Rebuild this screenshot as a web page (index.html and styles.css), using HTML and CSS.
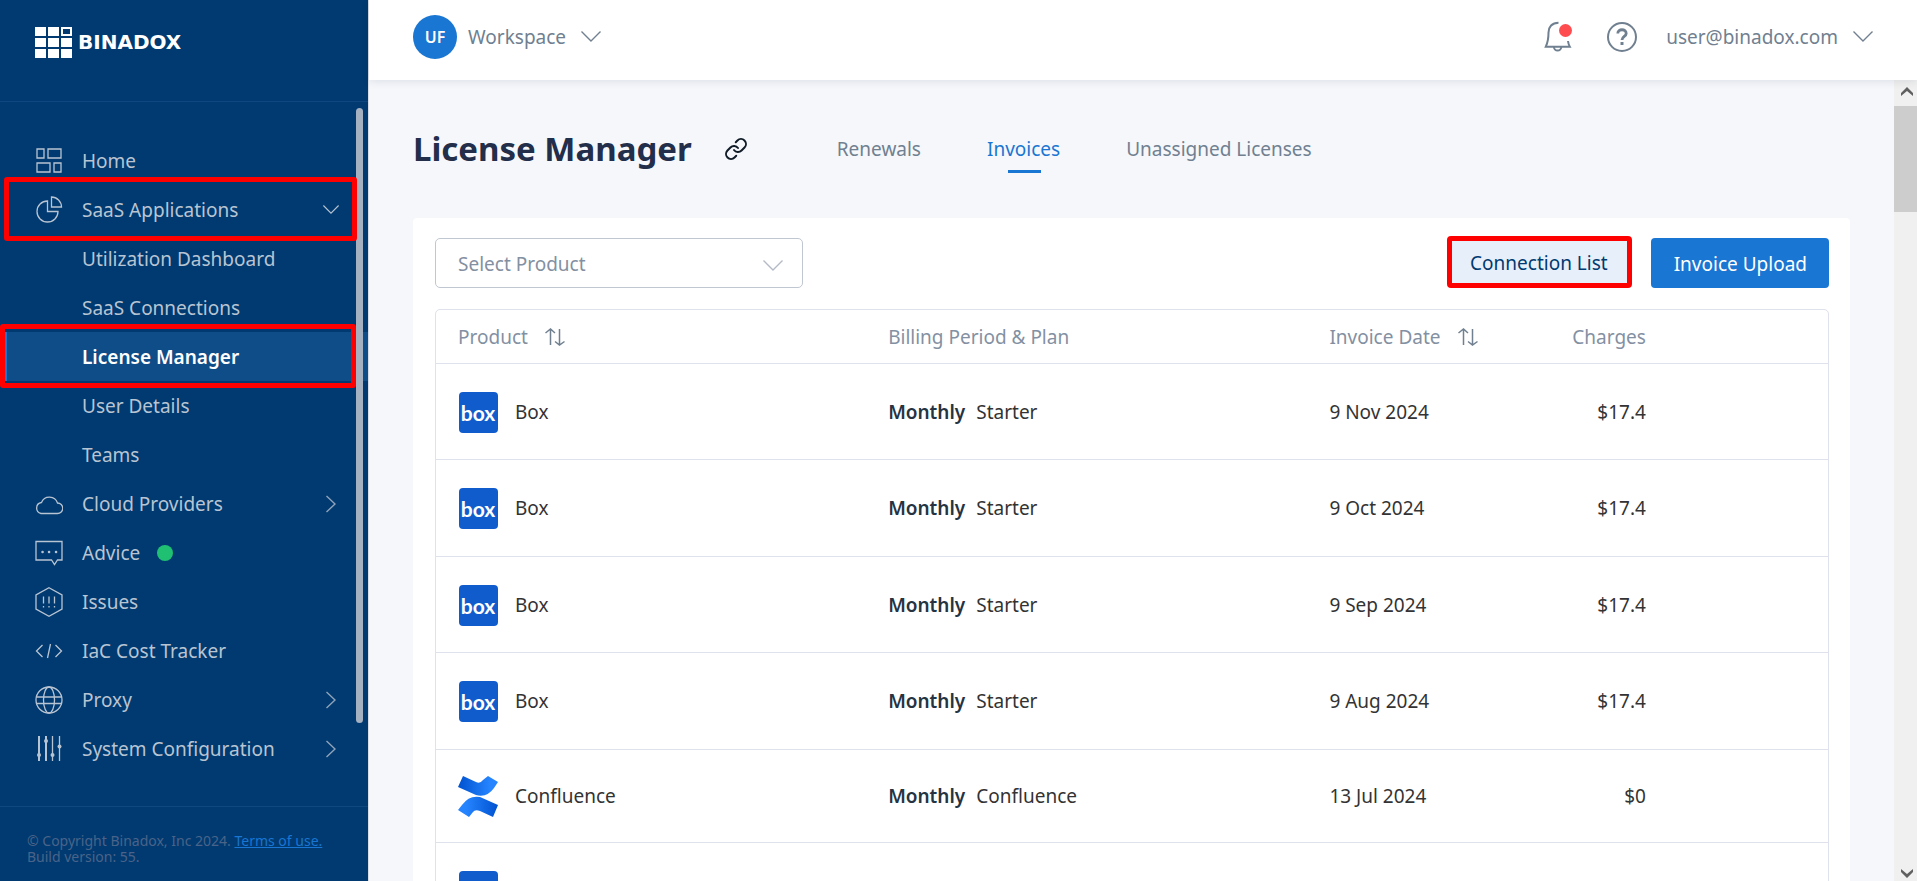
FILE: index.html
```html
<!DOCTYPE html>
<html lang="en">
<head>
<meta charset="utf-8">
<title>License Manager - Binadox</title>
<link rel="stylesheet" href="styles.css">
</head>
<body>
<svg class="defs" aria-hidden="true">
  <defs>
    <linearGradient id="cf-top" x1="0" x2="1" y1="0" y2="0"><stop offset="0" stop-color="#0052d0"/><stop offset=".8" stop-color="#2684ff"/></linearGradient>
    <linearGradient id="cf-bottom" x1="1" x2="0" y1="0" y2="0"><stop offset="0" stop-color="#0052d0"/><stop offset=".8" stop-color="#2684ff"/></linearGradient>
    <symbol id="box-logo" viewBox="0 0 40 42"><rect x="1" y="1" width="39" height="41" rx="4" fill="#115ccd"/><text x="20" y="30" text-anchor="middle" class="box-word">box</text></symbol>
    <symbol id="confluence-logo" viewBox="0 0 40 42"><path fill="url(#cf-top)" d="M5 1 L18 7 Q22 9 25 5 L30 1 L40 7 L36 13 Q29 23 18 20 L0 12Z"/><path fill="url(#cf-bottom)" d="M35 42 L22 36 Q17 34 15 37 L11 42 L0 35 L4 30 Q11 20 22 22 L40 30Z"/></symbol>
    <symbol id="down" viewBox="0 0 20 11"><path d="M.5 .5 10 10 19.5 .5"/></symbol>
    <symbol id="right" viewBox="0 0 10 18"><path d="M.5 1 9 9 .5 17"/></symbol>
    <symbol id="sort" viewBox="0 0 20 18"><path d="M5.500 17V1M.5 5 5.500 1 10 5M14.500 1V17M10 13.500 14.500 17 19.500 13.500"/></symbol>
  </defs>
</svg>
<div class="app">
  <aside class="sidebar">
    <a class="brand" href="#">
      <svg width="37" height="33" viewBox="0 0 37 33" aria-hidden="true"><g fill="#fff"><path d="M0 1h11v9H0zM13 1h11v9H13zM0 12h11v9H0zM13 12h11v9H13zM26 12h11v9H26zM0 23h11v9H0zM13 23h11v9H13zM26 23h11v9H26z"/></g><path d="M27 2h9v7h-9z" fill="none" stroke="#fff" stroke-width="2"/></svg>
      <span>BINADOX</span>
    </a>
    <nav class="nav">
      <a class="item" href="#"><svg class="icon" viewBox="0 0 28 28"><path d="M2 2h7v9H2zM13 2h13v9H13zM2 16h13v9H2zM19 16h7v9h-7z"/></svg>Home</a>
      <a class="item" href="#"><svg class="icon" viewBox="0 0 28 28"><path d="M12.500 5A10.500 10.500 0 1 0 23 15.500H12.500zM16.500 1V11H26.500A10 10 0 0 0 16.500 1z"/></svg>SaaS Applications<svg class="chev-down"><use href="#down"/></svg><i class="mark mark-parent"></i></a>
      <a class="item sub" href="#">Utilization Dashboard</a>
      <a class="item sub" href="#">SaaS Connections</a>
      <a class="item sub active" href="#">License Manager<i class="mark mark-active"></i></a>
      <a class="item sub" href="#">User Details</a>
      <a class="item sub" href="#">Teams</a>
      <a class="item" href="#"><svg class="icon" viewBox="0 0 28 28"><path d="M6 23.500H22.500A5 5 0 0 0 22.500 13A8.500 8.500 0 0 0 6.500 12.500A5.600 5.600 0 0 0 6 23.500z"/></svg>Cloud Providers<svg class="chev-right"><use href="#right"/></svg></a>
      <a class="item" href="#"><svg class="icon" viewBox="0 0 28 28"><path d="M1 2.500H27V21H22.500L19.500 25.500 16.500 21H1z"/><path class="dots" d="M7.500 13h.1M14 13h.1M21 13h.1"/></svg>Advice<i class="status"></i></a>
      <a class="item" href="#"><svg class="icon" viewBox="0 0 28 30"><path d="M14 .8 27 8V22L14 29.200 1 22V8zM8.500 9.500v7M14 9.500v7M19.500 9.500v7M8.500 19v1.500M14 19v1.500M19.500 19v1.500"/></svg>Issues</a>
      <a class="item" href="#"><svg class="icon" viewBox="0 0 28 28"><path d="M7.500 8 1.500 14 7.500 20M20.500 8 26.500 14 20.500 20M15.500 7 12.500 21"/></svg>IaC Cost Tracker</a>
      <a class="item" href="#"><svg class="icon" viewBox="0 0 28 28"><circle cx="14" cy="14" r="13"/><ellipse cx="14" cy="14" rx="5.500" ry="13"/><path d="M1.500 11H26.500M1.500 17.500H26.500"/></svg>Proxy<svg class="chev-right"><use href="#right"/></svg></a>
      <a class="item" href="#"><svg class="icon" viewBox="0 0 28 28"><path class="thick" d="M4 1V26M11 1V26"/><path d="M17.500 1V26M24.500 1V26"/><g class="knob"><circle cx="4" cy="20" r="2"/><circle cx="11" cy="6" r="2"/><circle cx="17.500" cy="20" r="2"/><circle cx="24.500" cy="11.500" r="2"/></g></svg>System Configuration<svg class="chev-right"><use href="#right"/></svg></a>
      <i class="nav-thumb"></i>
    </nav>
    <footer class="legal">© Copyright Binadox, Inc 2024. <a href="#">Terms of use.</a><br>Build version: 55.</footer>
  </aside>

  <div class="main">
    <header class="topbar">
      <button class="plain workspace"><span class="avatar">UF</span>Workspace<svg class="top-chev"><use href="#down"/></svg></button>
      <div class="tools">
        <button class="plain" aria-label="Notifications"><svg width="28" height="32" viewBox="0 0 28 32"><path d="M14.500 1.700C8 1.700 4.500 6 4.500 11.500C4.500 18 4 21 1.800 25.700H25.800C24.800 24 24.300 22.500 24 20" class="bell"/><path d="M10 26a3.600 3.600 0 0 0 7.200 0" class="bell"/><circle cx="21.500" cy="9.500" r="6.500" fill="#ff4d4f"/></svg></button>
        <button class="plain" aria-label="Help"><svg width="32" height="32" viewBox="0 0 32 32"><circle cx="16" cy="16" r="14" class="bell"/><path d="M11.800 12.500C11.800 7.500 20.200 7.500 20.200 12.500C20.200 15.500 16 15.500 16 19" class="q"/><path d="M14.500 21h3v3h-3z" fill="#708090"/></svg></button>
        <button class="plain account">user@binadox.com<svg class="top-chev"><use href="#down"/></svg></button>
      </div>
    </header>
    <div class="body">
      <main class="content">
        <div class="heading">
          <h1>License Manager</h1>
          <a class="link" href="#" aria-label="Copy link"><svg width="24" height="24" viewBox="0 0 24 24"><path d="M10 13a5 5 0 0 0 7.540.540l3-3a5 5 0 0 0-7.070-7.070l-1.720 1.710"/><path d="M14 11a5 5 0 0 0-7.540-.540l-3 3a5 5 0 0 0 7.070 7.070l1.710-1.710"/></svg></a>
          <nav class="tabs"><a href="#">Renewals</a><a class="current" href="#">Invoices</a><a href="#">Unassigned Licenses</a></nav>
        </div>
        <section class="card">
          <div class="controls">
            <div class="picker"><select aria-label="Select Product"><option>Select Product</option></select><svg class="picker-chev"><use href="#down"/></svg></div>
            <div class="actions"><button class="btn outlined">Connection List</button><button class="btn primary">Invoice Upload</button></div>
          </div>
          <div class="frame">
          <table>
            <colgroup><col class="c-product"><col class="c-plan"><col class="c-date"><col class="c-charge"><col></colgroup>
            <thead><tr><th>Product<svg class="sort"><use href="#sort"/></svg></th><th>Billing Period &amp; Plan</th><th>Invoice Date<svg class="sort"><use href="#sort"/></svg></th><th class="num">Charges</th><th></th></tr></thead>
            <tbody>
              <tr><td><div class="product"><svg class="logo"><use href="#box-logo"/></svg>Box</div></td><td><b>Monthly</b>Starter</td><td>9 Nov 2024</td><td class="num">$17.4</td><td></td></tr>
              <tr><td><div class="product"><svg class="logo"><use href="#box-logo"/></svg>Box</div></td><td><b>Monthly</b>Starter</td><td>9 Oct 2024</td><td class="num">$17.4</td><td></td></tr>
              <tr><td><div class="product"><svg class="logo"><use href="#box-logo"/></svg>Box</div></td><td><b>Monthly</b>Starter</td><td>9 Sep 2024</td><td class="num">$17.4</td><td></td></tr>
              <tr><td><div class="product"><svg class="logo"><use href="#box-logo"/></svg>Box</div></td><td><b>Monthly</b>Starter</td><td>9 Aug 2024</td><td class="num">$17.4</td><td></td></tr>
              <tr class="compact"><td><div class="product"><svg class="logo"><use href="#confluence-logo"/></svg>Confluence</div></td><td><b>Monthly</b>Confluence</td><td>13 Jul 2024</td><td class="num">$0</td><td></td></tr>
              <tr><td><div class="product"><svg class="logo"><use href="#box-logo"/></svg></div></td><td></td><td></td><td></td><td></td></tr>
            </tbody>
          </table>
          </div>
        </section>
      </main>
      <div class="scrollbar" aria-hidden="true">
        <svg width="12" height="10" viewBox="0 0 12 10"><path d="M0 9V6L6 0l6 6v3L6 4z"/></svg>
        <i></i>
        <svg class="end" width="12" height="10" viewBox="0 0 12 10"><path d="M0 1v3l6 6 6-6V1L6 6z"/></svg>
      </div>
    </div>
  </div>
</div>
</body>
</html>
```
FILE: styles.css
```css
* { box-sizing: border-box; }
html, body { height: 100%; margin: 0; }
body { font-family: "Noto Sans", "Open Sans", sans-serif; font-size: 19px; line-height: 26px; color: #333; overflow: hidden; }
a { color: inherit; text-decoration: none; }
button { font: inherit; cursor: pointer; }
svg { flex: none; fill: none; }
.defs { position: absolute; width: 0; height: 0; }
.app { display: flex; height: 100vh; }

.sidebar { flex: none; width: 369px; display: flex; flex-direction: column; background: #003a70; border-right: 1px solid #dadde3; color: #b9c4d2; }
.brand { display: flex; align-items: center; gap: 6px; height: 102px; padding: 0 0 17px 35px; border-bottom: 1px solid #0f4780; color: #fff; font: 700 20px "DejaVu Sans", sans-serif; }
.nav { position: relative; flex: 1; min-height: 0; padding-top: 34px; }
.item { position: relative; display: flex; align-items: center; height: 49px; padding: 0 28px 0 35px; }
.item.sub { padding-left: 82px; }
.item.active { background: #0f4d88; color: #fff; font-weight: 600; border-left: 7px solid #1976d2; padding-left: 75px; }
.icon { width: 28px; height: 30px; margin-right: 19px; stroke: #b9c4d2; stroke-width: 1.3; }
.icon .dots { stroke-width: 2.500; stroke-linecap: round; }
.icon .thick { stroke-width: 2; }
.icon .knob { fill: #b9c4d2; stroke: none; }
.chev-down { width: 16px; height: 9px; margin: 0 1px 0 auto; stroke: #b9c4d2; stroke-width: 1.400; }
.chev-right { width: 10px; height: 18px; margin: 0 4px 0 auto; stroke: #8fa3ba; stroke-width: 1.400; }
.status { width: 16px; height: 16px; margin-left: 17px; border-radius: 50%; background: #20c073; }
.mark { position: absolute; z-index: 2; height: 64px; border: 5px solid #f00; border-radius: 3px; }
.mark-parent { left: 4px; top: -8px; width: 353px; }
.mark-active { left: -7px; top: -8px; width: 356px; }
.nav-thumb { position: absolute; z-index: 1; top: 6px; right: 5px; bottom: 83px; width: 7px; border-radius: 4px; background: #a5b0c1; }
.legal { height: 75px; padding: 26px 27px 0; border-top: 1px solid #0f4780; font-size: 14px; line-height: 16px; white-space: nowrap; color: #4b6389; }
.legal a { color: #1976d2; text-decoration: underline; }

.main { flex: 1; min-width: 0; display: flex; flex-direction: column; }
.topbar { position: relative; z-index: 1; flex: none; display: flex; align-items: center; justify-content: space-between; height: 80px; padding: 0 44px 7px 44px; background: #fff; box-shadow: 0 2px 8px rgba(30, 40, 70, .1); }
.plain { display: flex; align-items: center; padding: 0; border: 0; background: none; color: #708090; }
.avatar { display: grid; place-items: center; width: 44px; height: 44px; margin-right: 11px; border-radius: 50%; background: #1976d2; color: #fff; font-size: 16px; font-weight: 600; }
.top-chev { width: 20px; height: 11px; margin-left: 15px; stroke: #708090; stroke-width: 1.400; }
.tools { display: flex; align-items: center; gap: 34px; }
.account { margin-left: -6px; }
.bell { stroke: #708090; stroke-width: 2; }
.q { stroke: #708090; stroke-width: 2.800; }

.body { flex: 1; min-height: 0; display: flex; background: #f5f7fb; }
.content { flex: 1; min-width: 0; padding: 0 44px; overflow: hidden; }
.heading { display: flex; align-items: center; height: 138px; }
h1 { margin: 0; font-size: 33px; line-height: 44px; font-weight: 700; color: #222e4a; }
.link { display: flex; margin-left: 32px; stroke: #111b27; stroke-width: 2; stroke-linecap: round; stroke-linejoin: round; }
.tabs { display: flex; gap: 66px; margin-left: 89px; color: #708090; }
.tabs .current { position: relative; color: #1976d2; }
.tabs .current::after { content: ""; position: absolute; left: 50%; top: 34px; width: 33px; height: 3px; margin-left: -16px; background: #1976d2; }

.card { padding: 20px 21px 0 22px; background: #fff; border-radius: 4px; }
.controls { display: flex; justify-content: space-between; margin-bottom: 21px; }
.picker { position: relative; width: 368px; }
.picker select { appearance: none; width: 100%; height: 50px; padding: 1px 22px 0; border: 1px solid #c0c7d0; border-radius: 5px; background: #fff; font: inherit; color: #8390a2; }
.picker-chev { position: absolute; right: 20px; top: 22px; width: 20px; height: 11px; stroke: #b3bac6; stroke-width: 1.400; pointer-events: none; }
.actions { display: flex; align-items: flex-end; gap: 19px; margin-top: -2px; }
.btn { border: 0; border-radius: 4px; }
.primary { height: 50px; padding: 1px 22px 0 23px; background: #1976d2; color: #fff; }
.outlined { height: 52px; padding: 1px 19px 0 18px; border: 5px solid #f00; background: #e7effa; color: #003a70; }

.frame { border: 1px solid #dfe1ec; border-radius: 5px; }
table { width: 100%; table-layout: fixed; border-collapse: separate; border-spacing: 0; }
.c-product { width: 30.900%; }
.c-plan { width: 31.700%; }
.c-date { width: 14%; }
.c-charge { width: 11.900%; }
th, td { padding: 0 22px; text-align: left; white-space: nowrap; border-bottom: 1px solid #dfe1ec; }
th { height: 54px; padding-top: 1px; font-weight: 400; color: #8390a2; }
td { height: 96px; }
tr:nth-child(even) td { height: 97px; }
tr.compact td { height: 93px; }
td b { margin-right: 11px; font-weight: 600; color: #263442; }
th.num, td.num { text-align: right; }
.sort { width: 20px; height: 18px; margin-left: 17px; vertical-align: -2px; stroke: #708090; stroke-width: 1.500; }
.product { display: flex; align-items: center; gap: 17px; }
.logo { width: 40px; height: 42px; }
.box-word { font-family: Lato, sans-serif; font-size: 21px; font-weight: 700; fill: #fff; }

.scrollbar { flex: none; display: flex; flex-direction: column; align-items: center; width: 23px; padding: 7px 0 3px; background: #f0f0f0; }
.scrollbar svg { fill: #606060; margin-left: 3px; }
.scrollbar i { width: 23px; height: 106px; margin-top: 9px; background: #cdcdcd; }
.scrollbar .end { margin-top: auto; }
```
